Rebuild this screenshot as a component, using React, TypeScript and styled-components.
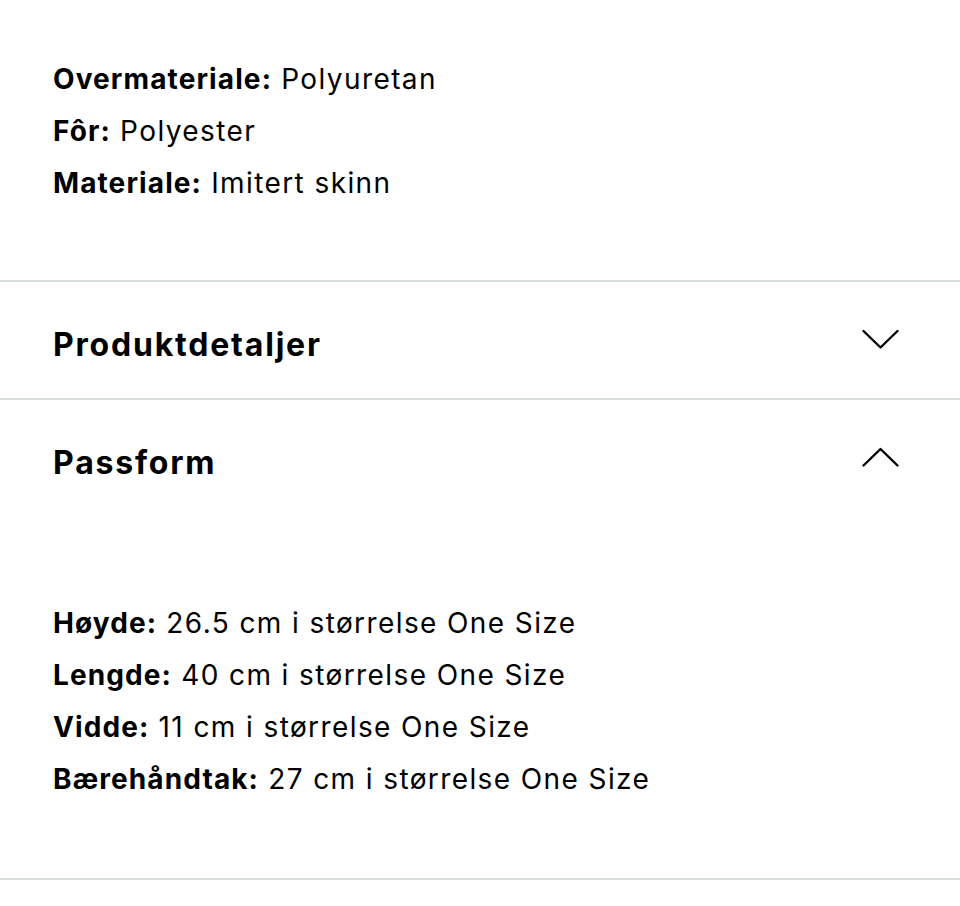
import React from "react";
import styled, { createGlobalStyle } from "styled-components";

const GlobalStyle = createGlobalStyle`
  html, body {
    margin: 0;
    padding: 0;
    background: #ffffff;
  }
  body {
    font-family: Inter, "Liberation Sans", Arial, sans-serif;
    color: #000000;
    -webkit-font-smoothing: antialiased;
  }
`;

const Page = styled.div`
  width: 960px;
  display: flex;
  flex-direction: column;
`;

const Section = styled.section`
  border-bottom: 2px solid #d6dddc;
`;

const SpecList = styled.dl<{ $top: number; $bottom: number }>`
  margin: 0;
  padding: ${(p) => p.$top}px 53px ${(p) => p.$bottom}px;
  display: flex;
  flex-direction: column;
`;

const SpecRow = styled.div`
  font-size: 28px;
  line-height: 52px;
  letter-spacing: 1.25px;
  white-space: nowrap;
`;

const SpecLabel = styled.dt`
  display: inline;
  font-weight: 700;
  letter-spacing: 1.1px;
  margin: 0;
`;

const SpecValue = styled.dd`
  display: inline;
  margin: 0;
  font-weight: 400;
  letter-spacing: 1.4px;
`;

const Header = styled.button`
  all: unset;
  box-sizing: border-box;
  width: 100%;
  display: flex;
  align-items: flex-start;
  justify-content: space-between;
  padding: 45px 61px 35px 53px;
  cursor: pointer;
`;

const Title = styled.h2`
  margin: 0;
  font-size: 32px;
  line-height: 36px;
  font-weight: 700;
  letter-spacing: 1.8px;
`;

const Chevron = styled.svg`
  display: block;
  margin-top: 2px;
  flex: none;
`;

const ChevronIcon = ({ up }: { up?: boolean }) => (
  <Chevron width="37" height="20" viewBox="0 0 37 20" fill="none">
    <path
      d={up ? "M1.5 18.5 L18.5 2 L35.5 18.5" : "M1.5 2 L18.5 18.5 L35.5 2"}
      stroke="#000"
      strokeWidth="2.4"
      strokeLinecap="round"
      strokeLinejoin="round"
    />
  </Chevron>
);

type Spec = { label: string; value: string };

const materials: Spec[] = [
  { label: "Overmateriale:", value: "Polyuretan" },
  { label: "Fôr:", value: "Polyester" },
  { label: "Materiale:", value: "Imitert skinn" },
];

const fit: Spec[] = [
  { label: "Høyde:", value: "26.5 cm i størrelse One Size" },
  { label: "Lengde:", value: "40 cm i størrelse One Size" },
  { label: "Vidde:", value: "11 cm i størrelse One Size" },
  { label: "Bærehåndtak:", value: "27 cm i størrelse One Size" },
];

const Specs = ({ items, top, bottom }: { items: Spec[]; top: number; bottom: number }) => (
  <SpecList $top={top} $bottom={bottom}>
    {items.map((s) => (
      <SpecRow key={s.label}>
        <SpecLabel>{s.label}</SpecLabel> <SpecValue>{s.value}</SpecValue>
      </SpecRow>
    ))}
  </SpecList>
);

export default function App() {
  return (
    <>
      <GlobalStyle />
      <Page>
        <Section>
          <Specs items={materials} top={53} bottom={71} />
        </Section>
        <Section>
          <Header>
            <Title>Produktdetaljer</Title>
            <ChevronIcon />
          </Header>
        </Section>
        <Section>
          <Header>
            <Title>Passform</Title>
            <ChevronIcon up />
          </Header>
          <Specs items={fit} top={81} bottom={73} />
        </Section>
      </Page>
    </>
  );
}
